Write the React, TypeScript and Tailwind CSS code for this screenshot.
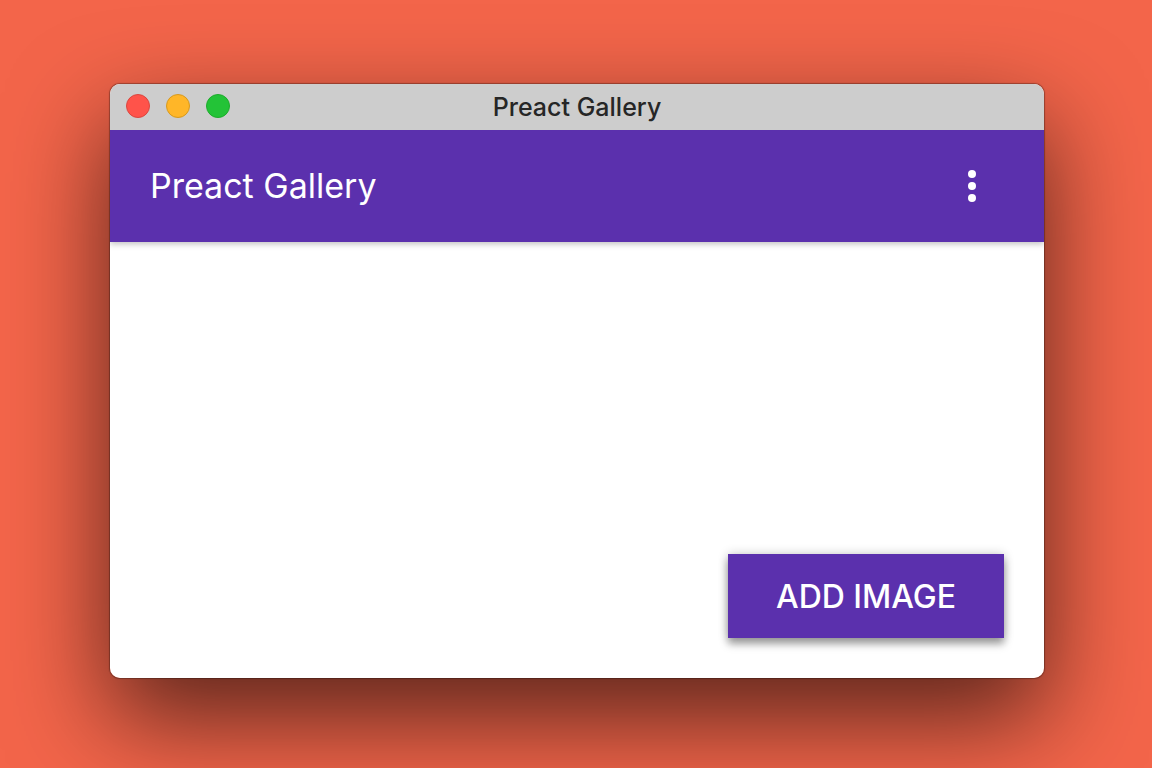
import React from 'react';

const trafficLights = [
  { label: 'Close', className: 'bg-[#ff534a] border-[#d9473f]' },
  { label: 'Minimize', className: 'bg-[#ffb628] border-[#d6991f]' },
  { label: 'Zoom', className: 'bg-[#23c337] border-[#1eab2c]' },
];

const TitleBar: React.FC<{ title: string }> = ({ title }) => {
  return (
    <div className="relative z-10 grid grid-cols-[1fr_auto_1fr] items-center h-[46px] px-4 bg-[#cdcdcd]">
      <div className="flex items-center gap-4 pb-0.5">
        {trafficLights.map((light) => (
          <button
            key={light.label}
            aria-label={light.label}
            className={`w-6 h-6 rounded-full border ${light.className}`}
          />
        ))}
      </div>
      <span className="text-[25px] leading-8 font-medium text-[#262626]">{title}</span>
    </div>
  );
};

const AppBar: React.FC<{ title: string }> = ({ title }) => {
  return (
    <header className="relative flex items-center justify-between h-28 pl-10 pr-12 bg-[#5b30ad] text-white shadow-[0_2px_6px_rgba(0,0,0,0.25)]">
      <h1 className="text-[34px] leading-10">{title}</h1>
      <button aria-label="More options" className="w-12 h-12">
        <svg viewBox="0 0 24 24" fill="currentColor" className="w-12 h-12">
          <circle cx="12" cy="6" r="2" />
          <circle cx="12" cy="12" r="2" />
          <circle cx="12" cy="18" r="2" />
        </svg>
      </button>
    </header>
  );
};

export default function App() {
  return (
    <div className="flex min-h-screen bg-[#f3654a] pt-[84px] pb-[90px] pl-[110px] pr-[108px] font-[Inter,'Liberation_Sans',sans-serif]">
      <div className="flex flex-1 flex-col rounded-[10px] shadow-[0_0_1px_1px_rgba(0,0,0,0.3),0_40px_100px_rgba(0,0,0,0.64)]">
        <div className="flex flex-1 flex-col overflow-hidden rounded-[10px] bg-white">
          <TitleBar title="Preact Gallery" />
          <AppBar title="Preact Gallery" />
          <main className="flex flex-1 items-end justify-end p-10">
            <button className="h-[84px] px-12 pt-0.5 bg-[#5b30ad] text-[32px] leading-10 font-medium text-white shadow-[0_6px_8px_rgba(0,0,0,0.35),0_0_10px_rgba(0,0,0,0.2)]">
              ADD IMAGE
            </button>
          </main>
        </div>
      </div>
    </div>
  );
}
